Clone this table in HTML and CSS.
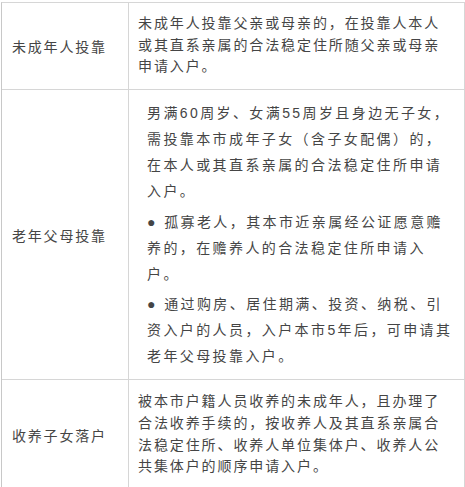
FILE: index.html
```html
<!DOCTYPE html>
<html lang="zh-CN">
<head>
<meta charset="utf-8">
<link rel="stylesheet" href="styles.css">
</head>
<body>
<div class="table">
  <div class="row r1">
    <div class="cell label">未成年人投靠</div>
    <div class="cell text">未成年人投靠父亲或母亲的，在投靠人本人<br>或其直系亲属的合法稳定住所随父亲或母亲<br>申请入户。</div>
  </div>
  <div class="row r2">
    <div class="cell label">老年父母投靠</div>
    <div class="cell text wide">
      <p>男满60周岁、女满55周岁且身边无子女，<br>需投靠本市成年子女（含子女配偶）的，<br>在本人或其直系亲属的合法稳定住所申请<br>入户。</p>
      <p>●&nbsp;孤寡老人，其本市近亲属经公证愿意赡<br>养的，在赡养人的合法稳定住所申请入<br>户。</p>
      <p>●&nbsp;通过购房、居住期满、投资、纳税、引<br>资入户的人员，入户本市5年后，可申请其<br>老年父母投靠入户。</p>
    </div>
  </div>
  <div class="row r3">
    <div class="cell label">收养子女落户</div>
    <div class="cell text">被本市户籍人员收养的未成年人，且办理了<br>合法收养手续的，按收养人及其直系亲属合<br>法稳定住所、收养人单位集体户、收养人公<br>共集体户的顺序申请入户。</div>
  </div>
</div>
</body>
</html>
```

FILE: styles.css
```css
html, body {
  margin: 0;
  padding: 0;
  background: #ffffff;
}
body {
  font-family: "Liberation Sans", "Noto Sans CJK SC", sans-serif;
  font-size: 14px;
  color: #454545;
}
.table {
  margin: 2px 0 0 1px;
  width: 462px;
  border-top: 1px solid #d6d6d6;
  border-left: 1px solid #c8c8c8;
  border-right: 1px solid #d6d6d6;
}
.row {
  display: grid;
  grid-template-columns: 127px 1fr;
  border-bottom: 1px solid #d6d6d6;
}
.cell {
  white-space: nowrap;
}
.label {
  display: flex;
  align-items: center;
  padding-left: 10px;
  letter-spacing: 1.8px;
  border-right: 1px solid #d6d6d6;
}
.text {
  padding: 10px 0 11px 9px;
  line-height: 21.7px;
  letter-spacing: 1.9px;
}
.text.wide {
  padding: 10px 0 10px 18px;
  line-height: 26px;
  letter-spacing: 2.4px;
}
.text.wide p {
  margin: 0 0 4.5px 0;
}
.text.wide p:last-child {
  margin-bottom: 0;
}
.r3 .text {
  padding-top: 11px;
}
```
